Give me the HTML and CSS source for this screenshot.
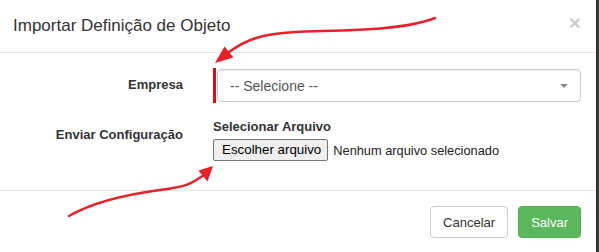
FILE: index.html
```html
<!DOCTYPE html>
<html>
<head>
    <meta charset="UTF-8">
    <title>Importar Definição de Objeto</title>
    <link rel="stylesheet" href="styles.css">
</head>
<body>
    <div class="modal">
        <div class="modal-header">
            <h4 class="modal-title">Importar Definição de Objeto</h4>
            <span class="close">&times;</span>
        </div>
        <div class="modal-body">
            <div class="form-group">
                <label class="control-label">Empresa</label>
                <div class="control required">
                    <div class="select">
                        <span>-- Selecione --</span>
                        <span class="caret"></span>
                    </div>
                </div>
            </div>
            <div class="form-group">
                <label class="control-label">Enviar Configuração</label>
                <div class="control">
                    <div class="sub-label">Selecionar Arquivo</div>
                    <div class="file">
                        <span class="file-btn">Escolher arquivo</span>
                        <span class="file-name">Nenhum arquivo selecionado</span>
                    </div>
                </div>
            </div>
        </div>
        <div class="modal-footer">
            <button class="btn btn-default">Cancelar</button>
            <button class="btn btn-success">Salvar</button>
        </div>

        <!-- anotações -->
        <svg class="marks" width="597" height="252" viewBox="0 0 597 252">
            <path d="M435,18 C400,32 330,30 295,32 S246,40 229,52" fill="none" stroke="#e8202a" stroke-width="2.5" stroke-linecap="round"/>
            <polygon points="215,63 224.5,46.5 233.5,57.5" fill="#e8202a"/>
            <path d="M69,216 C95,201 130,194 160,190 S192,183 204,175" fill="none" stroke="#e8202a" stroke-width="2.5" stroke-linecap="round"/>
            <polygon points="213,166 198.5,170.5 207.5,181.5" fill="#e8202a"/>
        </svg>
    </div>
</body>
</html>
```

FILE: styles.css
```css
body{
    margin:0;
    background:#3a3a3a;
    font-family:"Liberation Sans", Arial, sans-serif;
    font-size:14px;
    color:#333;
}
.modal{
    position:relative;
    width:597px;
    height:252px;
    background:#fff;
    border-right:solid 1px #2b2b2b;
    box-sizing:border-box;
}
.modal-header{
    display:flex;
    justify-content:space-between;
    align-items:center;
    height:52px;
    padding:0 15px 0 13px;
    border-bottom:solid 1px #e5e5e5;
}
.modal-title{
    margin:0;
    font-size:17px;
    font-weight:normal;
    color:#333;
}
.close{
    font-size:21px;
    font-weight:bold;
    color:#000;
    opacity:.2;
    line-height:1;
    margin-top:-8px;
}
.modal-body{
    padding:15px 15px 14px 15px;
}
.form-group{
    display:flex;
    margin-bottom:15px;
}
.control-label{
    width:168px;
    text-align:right;
    font-weight:bold;
    font-size:13px;
    padding-top:9px;
    margin-right:30px;
}
.control{
    flex:1;
}
.required{
    border-left:solid 3px #e10b17;
    padding-left:1px;
    height:35px;
    box-sizing:border-box;
}
.select{
    display:flex;
    justify-content:space-between;
    align-items:center;
    height:33px;
    margin-top:1px;
    border:solid 1px #ccc;
    border-radius:4px;
    padding:0 12px;
    color:#555;
    box-shadow:inset 0 1px 1px rgba(0,0,0,.075);
    box-sizing:border-box;
}
.caret{
    width:0;
    height:0;
    border-left:4px solid transparent;
    border-right:4px solid transparent;
    border-top:4px solid #888;
}
.sub-label{
    font-weight:bold;
    font-size:13px;
    margin-top:1px;
    margin-bottom:5px;
}
.file{
    display:flex;
    align-items:center;
    font-size:13.33px;
    color:#222;
}
.file-btn{
    display:inline-block;
    background:#efefef;
    border:solid 1px #767676;
    border-radius:2px;
    padding:2px 6px 2px 8px;
    line-height:16px;
    color:#000;
}
.file-name{
    margin-left:5px;
    font-size:12.8px;
}
.modal-footer{
    display:flex;
    justify-content:flex-end;
    gap:10px;
    padding:15px;
    border-top:solid 1px #e5e5e5;
}
.btn{
    font-family:inherit;
    font-size:13px;
    height:32px;
    padding:0 12px;
    border-radius:4px;
    border:solid 1px #ccc;
    background:#fff;
    color:#333;
}
.btn-success{
    background:#5cb85c;
    border-color:#4cae4c;
    color:#fff;
}
.marks{
    position:absolute;
    left:0;
    top:0;
    pointer-events:none;
}
```
